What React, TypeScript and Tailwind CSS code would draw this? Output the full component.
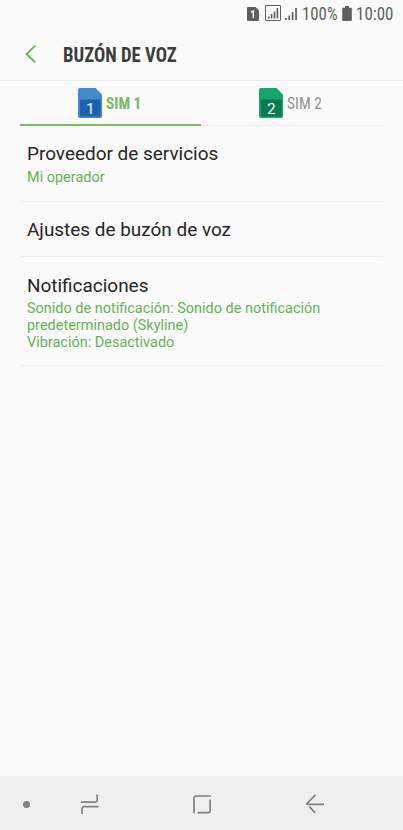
import React from 'react';

interface SettingItem {
    title: string;
    lines: string[];
    className: string;
    titleClassName: string;
}

const items: SettingItem[] = [
    { title: 'Proveedor de servicios', lines: ['Mi operador'], className: 'h-[76px] pt-4', titleClassName: 'mb-[3px]' },
    { title: 'Ajustes de buzón de voz', lines: [], className: 'h-[55px] pt-4', titleClassName: '' },
    {
        title: 'Notificaciones',
        lines: ['Sonido de notificación: Sonido de notificación', 'predeterminado (Skyline)', 'Vibración: Desactivado'],
        className: 'h-[109px] pt-[17px]',
        titleClassName: 'mb-[2px]',
    },
];

const condensed = "font-['Roboto_Condensed',Roboto,sans-serif]";

const SignalBars = () => (
    <path d="M0 10h1.700v2H0zM3.400 7.500h1.700V12H3.400zM6.800 4h1.700v8H6.800zM10.200 0h1.700v12h-1.700z" />
);

const StatusBar = () => (
    <div className="flex h-7 items-start pl-[247px] text-[#5e5e5e]">
        <svg className="mt-[7px] h-[14px] w-3 shrink-0" viewBox="0 0 12 14" aria-hidden="true">
            <path fill="currentColor" d="M1 0h7.500L12 3.500V13a1 1 0 0 1-1 1H1a1 1 0 0 1-1-1V1a1 1 0 0 1 1-1z" />
            <path fill="none" stroke="#fafafa" strokeWidth="1.400" d="M4 5l2.300-1v7" />
        </svg>
        <svg className="ml-[6px] mt-[5px] h-4 w-4 shrink-0" viewBox="0 0 16 16" fill="currentColor" aria-hidden="true">
            <rect x=".5" y=".5" width="15" height="15" rx=".5" fill="none" stroke="currentColor" />
            <path d="M3 11.500h1.600v2H3zM5.800 9h1.600v4.500H5.800zM8.700 6.500h1.600v7H8.700zM11.600 3h1.600v10.500h-1.600z" />
        </svg>
        <svg className="ml-1 mt-2 h-3 w-3 shrink-0" viewBox="0 0 12 12" fill="currentColor" aria-hidden="true">
            <SignalBars />
        </svg>
        <span className={`ml-[5px] mt-1 w-[40px] whitespace-nowrap text-[17.500px] leading-5 ${condensed}`}>
            <span className="inline-block origin-left scale-x-[0.96]">100%</span>
        </span>
        <svg className="mt-[6px] h-[15px] w-[10px] shrink-0" viewBox="0 0 10 15" fill="currentColor" aria-hidden="true">
            <path d="M3 0h4v1.700h2a.8.8 0 0 1 .8.8v11.700a.8.8 0 0 1-.8.8H1a.8.8 0 0 1-.8-.8V2.500a.8.8 0 0 1 .8-.8h2z" />
        </svg>
        <span className={`ml-1 mt-1 whitespace-nowrap text-[17.500px] leading-5 ${condensed}`}>
            <span className="inline-block origin-left scale-x-[0.97]">10:00</span>
        </span>
    </div>
);

interface SimIconProps {
    slot: string;
    body: string;
    label: string;
}

const SimIcon: React.FC<SimIconProps> = ({ slot, body, label }) => (
    <svg className="h-[30px] w-6 shrink-0" viewBox="0 0 24 30" aria-hidden="true">
        <path fill={body} d="M2 0h15.500L24 6.500V28a2 2 0 0 1-2 2H2a2 2 0 0 1-2-2V2a2 2 0 0 1 2-2z" />
        <rect x="2" y="11.500" width="20.500" height="17" rx="1" fill={label} />
        <text x="12.300" y="25.500" textAnchor="middle" fontSize="15.500" fill="#f2f6fa" fontFamily="Roboto, sans-serif">{slot}</text>
    </svg>
);

export default function App() {
    return (
        <div className="flex h-[830px] w-[403px] flex-col overflow-hidden bg-[#fafafa] font-[Roboto,sans-serif]">
            <StatusBar />
            <header className="flex h-[53px] items-center border-b border-[#eeeeee] pl-[25px]">
                <svg className="h-[18px] w-[11px]" viewBox="0 0 11 18" fill="none" stroke="#66b357" strokeWidth="1.8" aria-hidden="true">
                    <path d="M10.200.700L1.500 9l8.700 8.300" />
                </svg>
                <h1 className={`ml-[27px] mt-[3px] whitespace-nowrap text-[19.500px] font-bold text-[#3c3c3c] ${condensed}`}>
                    <span className="inline-block origin-left scale-x-[0.96]">BUZÓN DE VOZ</span>
                </h1>
            </header>
            <nav className="mx-5 flex h-[45px] w-[363px]">
                <button className="flex w-[181px] items-start border-b-2 border-[#74bd61] pl-[58px] pt-[7px]">
                    <SimIcon slot="1" body="#428aca" label="#1b63b0" />
                    <span className={`ml-1 mt-[6px] whitespace-nowrap text-[16.500px] leading-5 font-bold text-[#72bd5d] ${condensed}`}>
                        <span className="inline-block origin-left scale-x-[0.93]">SIM 1</span>
                    </span>
                </button>
                <button className="flex w-[182px] items-start border-b border-[#eeeeee] pl-[58px] pt-[7px]">
                    <SimIcon slot="2" body="#16a46c" label="#087a4d" />
                    <span className={`ml-1 mt-[6px] whitespace-nowrap text-[16.500px] leading-5 text-[#929292] ${condensed}`}>
                        <span className="inline-block origin-left scale-x-[0.94]">SIM 2</span>
                    </span>
                </button>
            </nav>
            <main className="mx-5 flex-1">
                {items.map(item => (
                    <section key={item.title} className={`border-b border-[#eeeeee] pl-[7px] ${item.className}`}>
                        <h2 className={`text-[18.950px] leading-6 text-[#252525] ${item.titleClassName}`}>{item.title}</h2>
                        {item.lines.map(line => (
                            <p key={line} className="whitespace-nowrap text-[14.480px] leading-[17px] text-[#66b255]">{line}</p>
                        ))}
                    </section>
                ))}
            </main>
            <footer className="flex h-[54px] items-start bg-[#efefef] text-[#818181]">
                <span className="ml-[23px] mt-[25px] h-[7px] w-[7px] rounded-full bg-current" />
                <svg className="ml-[51px] mt-[18px] h-5 w-[18px]" viewBox="0 0 18 20" fill="none" stroke="currentColor" strokeWidth="1.7" aria-hidden="true">
                    <path d="M0 8.200h14.200a2 2 0 0 0 2-2V.4M17.500 12.700H3a2 2 0 0 0-2 2V20" />
                </svg>
                <svg className="ml-[94px] mt-[18px] h-5 w-[18px]" viewBox="0 0 18 20" fill="none" stroke="currentColor" strokeWidth="1.7" aria-hidden="true">
                    <path d="M17.900 2H3a2 2 0 0 0-2 2V19.200M17.100 5.500V16.600a2 2 0 0 1-2 2H4.500" />
                </svg>
                <svg className="ml-[95px] mt-[18px] h-5 w-[19px]" viewBox="0 0 19 20" fill="none" stroke="currentColor" strokeWidth="1.700" aria-hidden="true">
                    <path d="M9.500.900L1 9.500a.500.500 0 0 0 .400.800H18M3.300 12.700l6 6.200" />
                </svg>
            </footer>
        </div>
    );
}
